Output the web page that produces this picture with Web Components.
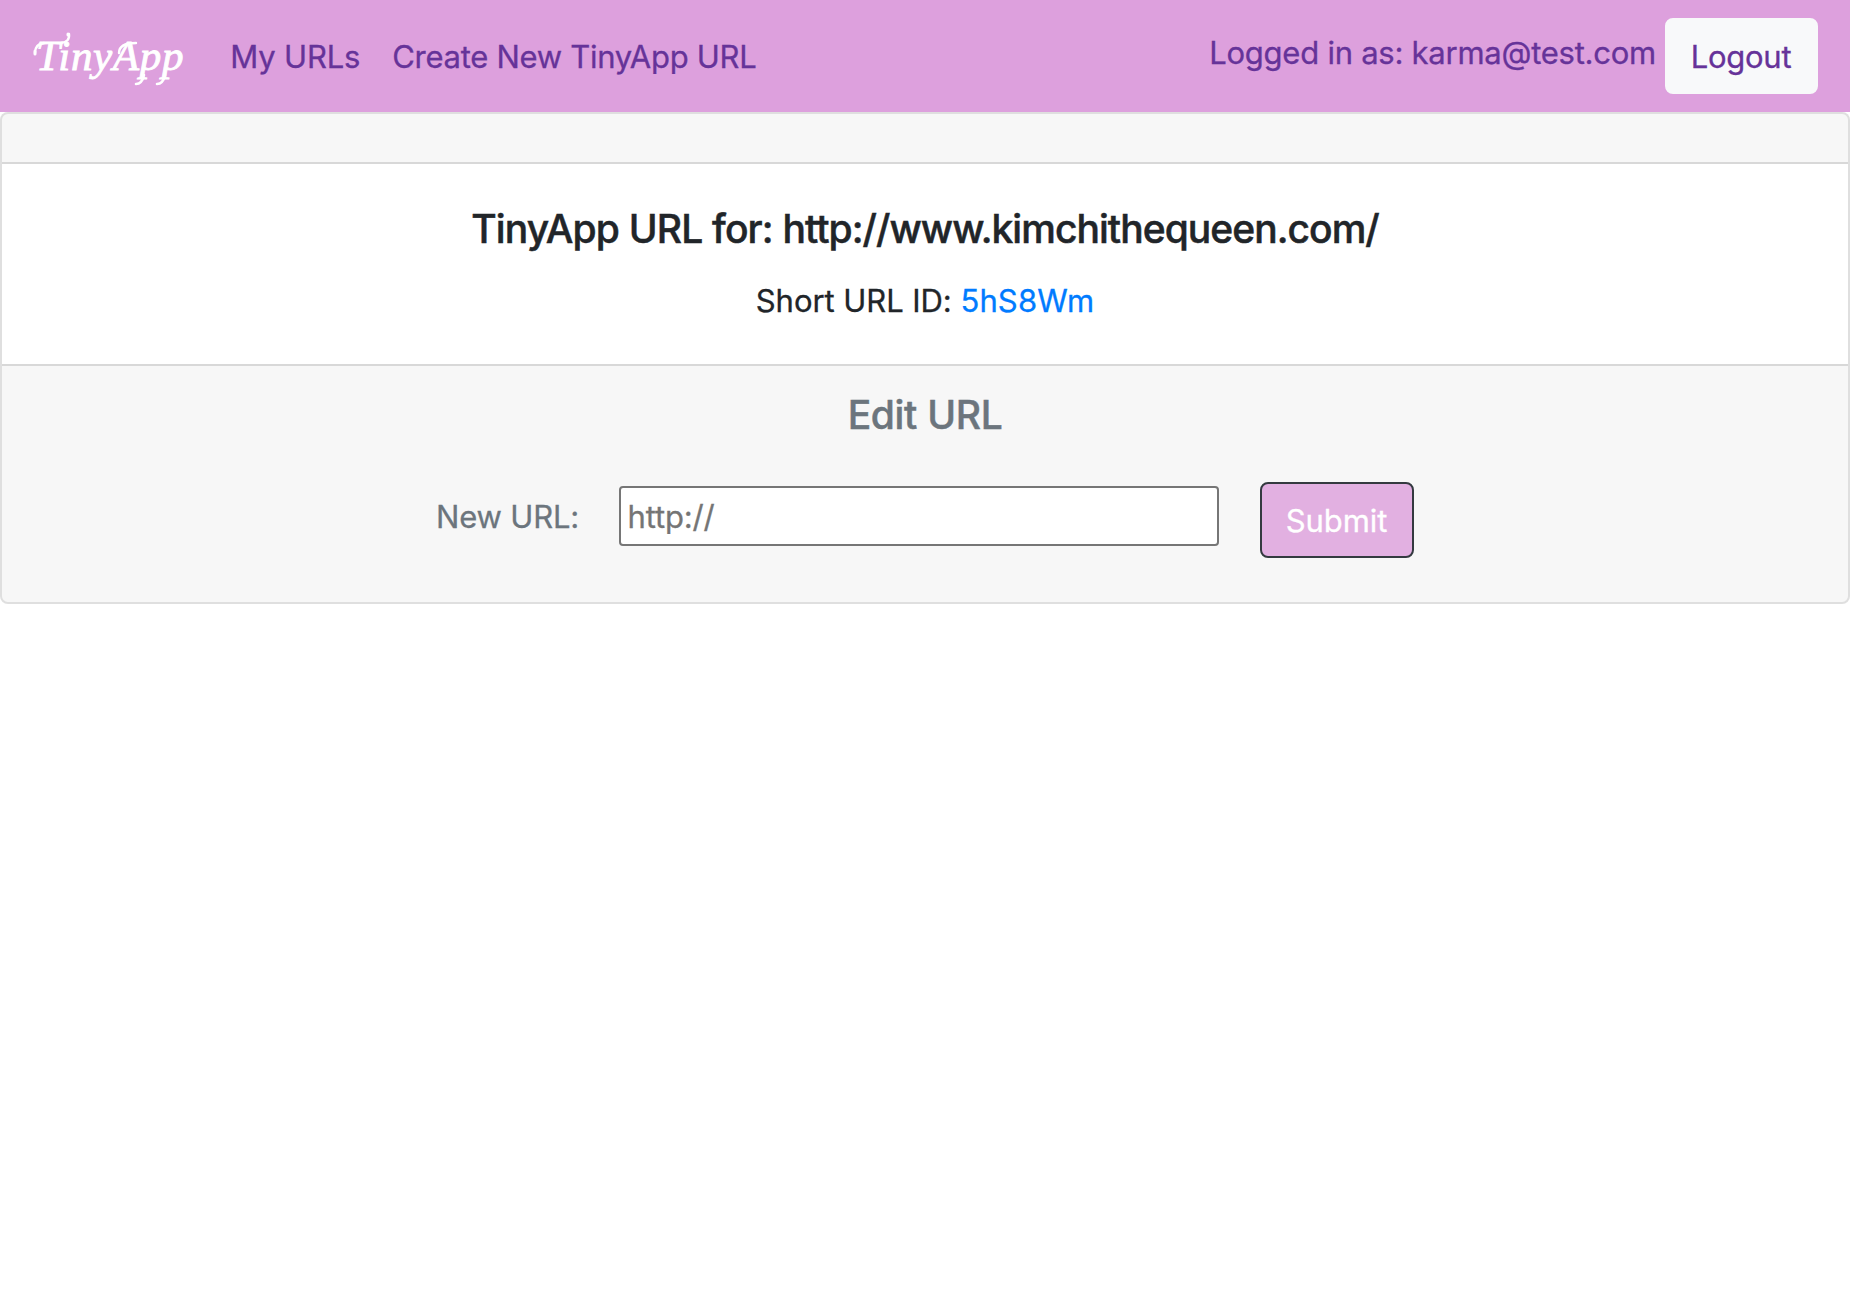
<!DOCTYPE html>
<html lang="en">
<head>
<meta charset="utf-8">
<title>TinyApp</title>
<style>
body{margin:0;background:#fff;color:#212529;font:400 31px/50px Inter,"Open Sans",sans-serif;-webkit-text-stroke:.3px}
</style>
</head>
<body>
<tiny-navbar user="karma@test.com">
  <tiny-brand slot="brand">TinyApp</tiny-brand>
  <tiny-link style="letter-spacing:-.18px">My URLs</tiny-link>
  <tiny-link style="letter-spacing:-.284px">Create New TinyApp URL</tiny-link>
  <tiny-button slot="action" kind="light">Logout</tiny-button>
</tiny-navbar>
<url-card>
  <url-title slot="title" href="http://www.kimchithequeen.com/"></url-title>
  <short-url slot="short">5hS8Wm</short-url>
  <edit-form slot="footer"></edit-form>
</url-card>
<script>
const define = (name, html, setup) => {
  const template = document.createElement('template');
  template.innerHTML = html;
  customElements.define(name, class extends HTMLElement {
    constructor() {
      super();
      this.attachShadow({mode: 'open'}).append(template.content.cloneNode(true));
    }
    connectedCallback() { if (setup) setup(this, this.shadowRoot); }
  });
};

define('tiny-brand', `<style>
:host{display:block;position:relative;width:198.3px;height:60px;color:#fff;font:italic 400 43px/60px "Liberation Serif",serif;letter-spacing:.7px;-webkit-text-stroke:.9px #fff;white-space:nowrap}
.name{display:block;padding-left:4px}
svg{position:absolute;left:0;top:0;overflow:visible;fill:none;stroke:#fff;stroke-linecap:round;stroke-linejoin:round}
</style><span class="name"><slot></slot></span>
<svg width="160" height="64" aria-hidden="true">
<path stroke-width="2.4" d="M12 17Q3 18 3 27"/><path stroke-width="3" d="M3 25v3"/>
<path stroke-width="2.4" d="M29 17Q38 16 37 8"/><path stroke-width="3" d="M36 8v1"/>
<path stroke-width="2.4" d="M87 27Q87 17 104 17"/>
<path stroke-width="2.6" d="M112 49Q110 58 104 58M133 49Q131 58 125 58"/>
</svg>`);

define('tiny-link', `<style>
:host{display:block;padding:17px 16px 15px;white-space:nowrap}
a{color:#639;text-decoration:none}
</style><a href="#"><slot></slot></a>`);

define('tiny-button', `<style>
:host{display:block;flex:none}
button{display:block;box-sizing:border-box;width:153px;height:76px;margin:0;padding:2px 1px 0 0;border:2px solid #f8f9fa;border-radius:8px;background:#f8f9fa;color:#639;font:inherit;letter-spacing:-.28px}
:host([kind=submit]) button{width:154px;border-color:#343a40;background:#e2b0e1;color:#fff;letter-spacing:-.1px}
</style><button type="button"><slot></slot></button>`);

define('tiny-navbar', `<style>
:host{display:flex;align-items:center;box-sizing:border-box;height:112px;padding:0 32px;background:plum}
nav{display:flex;margin-left:-16px}
.user{display:flex;align-items:center;margin-left:auto;gap:9px;color:#639}
.who{padding-bottom:6px;letter-spacing:-.25px;white-space:nowrap}
</style><slot name="brand"></slot><nav><slot></slot></nav>
<div class="user"><span class="who"></span><slot name="action"></slot></div>`,
(host, root) => { root.querySelector('.who').textContent = 'Logged in as: ' + host.getAttribute('user'); });

define('url-title', `<style>
:host{display:block}
h5{margin:0 0 22px;font:500 39px/50px Inter,sans-serif;letter-spacing:-.96px;-webkit-text-stroke:.5px}
.lead{letter-spacing:-.83px}
</style><h5><span class="lead">TinyApp URL for: </span><span class="url"></span></h5>`,
(host, root) => { root.querySelector('.url').textContent = host.getAttribute('href'); });

define('short-url', `<style>
:host{display:block}
p{margin:0;letter-spacing:-.06px}
a{color:#007bff;text-decoration:none;letter-spacing:.15px}
</style><p>Short URL ID: <a href="#"><slot></slot></a></p>`);

define('edit-form', `<style>
:host{display:block;color:#6c757d}
h5{margin:0;font:500 39px/50px Inter,sans-serif;letter-spacing:-.323px;-webkit-text-stroke:.5px}
form{display:flex;justify-content:center;align-items:flex-start;margin:42px 0 0}
label{flex:none;width:144px;margin:10px 39px 0 0;text-align:left;letter-spacing:-.18px;white-space:nowrap}
input{box-sizing:border-box;width:600px;height:60px;margin:4px 41px 0 0;padding:2px 6.5px;border:2px solid #767676;border-radius:4px;background:#fff;font:inherit;line-height:48px;letter-spacing:-.157px;-webkit-text-stroke:.3px}
input::placeholder{color:#757575;opacity:1}
</style><h5>Edit URL</h5>
<form><label for="u">New URL:</label><input id="u" type="text" placeholder="http://"><tiny-button kind="submit">Submit</tiny-button></form>`);

define('url-card', `<style>
:host{display:block;box-sizing:border-box;height:492px;border:2px solid rgba(0,0,0,.125);border-radius:8px;background:#fff;text-align:center;overflow:hidden}
header{box-sizing:border-box;height:50px;border-bottom:2px solid rgba(0,0,0,.125);background:rgba(0,0,0,.03)}
main{padding:40px 40px 38px}
footer{box-sizing:border-box;height:238px;padding:24px 40px 0;border-top:2px solid rgba(0,0,0,.125);background:rgba(0,0,0,.03)}
</style><header></header><main><slot name="title"></slot><slot name="short"></slot></main><footer><slot name="footer"></slot></footer>`);
</script>
</body>
</html>
